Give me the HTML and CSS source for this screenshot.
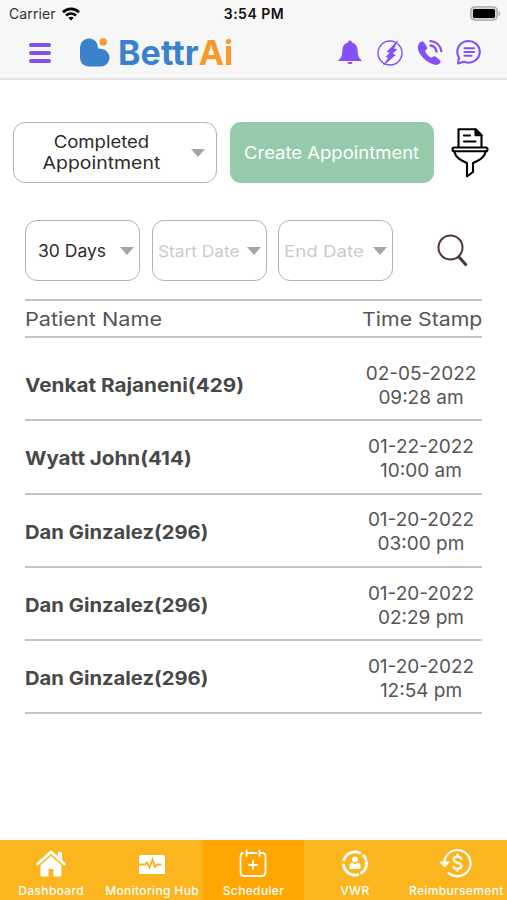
FILE: index.html
```
<!DOCTYPE html>
<html lang="en">
<head>
<meta charset="utf-8">
<title>BettrAi Scheduler</title>
<link rel="stylesheet" href="styles.css">
</head>
<body>
<div class="app">
  <header class="top">
    <div class="status">
      <div class="carrier"><span>Carrier</span>
        <svg width="18" height="14" viewBox="0 0 18 14" fill="none" stroke="#000" stroke-width="2.6"><path d="M1 5.2C5.5.8 12.5.8 17 5.2M4 8.5c2.800-2.700 7.200-2.700 10 0"/><path d="M9 13.500 6.300 10.800c1.500-1.400 3.900-1.400 5.400 0z" fill="#000" stroke="none"/></svg>
      </div>
      <div class="clock">3:54 PM</div>
      <svg class="battery" width="32" height="15" viewBox="0 0 32 15"><rect x=".8" y=".8" width="26.400" height="13.400" rx="4" fill="#d5d5d5" stroke="#aaa" stroke-width="1.300"/><rect x="3" y="3" width="22" height="9" rx="1.500" fill="#000"/><path d="M28.500 5c2.300.7 2.300 4.300 0 5z" fill="#aaa"/></svg>
    </div>
    <nav class="bar">
      <svg class="menu" width="24" height="22" viewBox="0 0 24 22" stroke="#8250f0" stroke-width="4" stroke-linecap="round"><path d="M3 3h18M3 11h18M3 19h18"/></svg>
      <div class="brand">
        <svg width="32" height="32" viewBox="0 0 32 32"><path d="M0 10.500a9 9 0 0 1 17.300-3.500c.7 2 .1 3.500 1 4.300.9.800 2 .4 3.700.7a8.800 8.800 0 0 1-1 17.500H9.500c-6 0-9.500-4-9.500-9z" fill="#3a83cc"/><circle cx="23.200" cy="4.900" r="3.700" fill="#f8992c"/></svg>
        <span class="word">Bettr<b>Ai</b></span>
      </div>
      <div class="actions">
        <svg width="26" height="28" viewBox="0 0 26 28" fill="#8550fa"><path d="M13 1.500c1.200 0 2 .8 2 2 4.200 1 5.500 4.500 5.700 8.500.2 5 1.300 7.500 4 9.200v.8H1.300v-.8c2.700-1.700 3.800-4.200 4-9.200.2-4 1.500-7.500 5.700-8.500 0-1.200.8-2 2-2zM10.500 23h5c0 3-5 3-5 0z"/></svg>
        <svg width="28" height="28" viewBox="0 0 28 28"><circle cx="14" cy="14" r="12" fill="none" stroke="#8550fa" stroke-width="1.400"/><path d="M22.500.5 10.500 13l3.300.8-4.500 4.200 2.800.8L6.500 27.500 20 15.800l-3.200-1 4.500-4.500-3.200-.8z" fill="#8550fa"/></svg>
        <svg width="26" height="28" viewBox="0 0 26 28"><path d="M2 4.500C4 2 6 2 7.500 4L10 8c.8 1.500-.4 2.500-1.700 3.500-1.200 1 4.700 8 6.700 7 1.400-1 2.300-1.700 3.700-.8l4 3c2 1.800.5 3.600-1.700 4.800C15 28-4 14 2 4.500z" fill="#8550fa"/><path d="M13.500 6.500c3.500.5 5.500 3 6 6M13.500 2.200c6 .5 10 4.500 10.800 10" fill="none" stroke="#8550fa" stroke-width="2.300" stroke-linecap="round"/></svg>
        <svg width="26" height="28" viewBox="0 0 26 28" fill="none" stroke="#8550fa" stroke-width="2.100" stroke-linecap="round" stroke-linejoin="round"><path d="M2 24.500 3 18.500A11.200 10.800 0 1 1 8 22.700z"/><path d="M8.500 9.300h9.500M8.500 13h9.500M8.500 16.700h7"/></svg>
      </div>
    </nav>
  </header>

  <main class="content">
    <div class="row-main">
      <div class="select select-lg"><span>Completed<br><span class="wide">Appointment</span></span><i class="caret"></i></div>
      <button class="create"><span>Create Appointment</span></button>
      <svg class="funnel" width="38" height="52" viewBox="0 0 38 52" fill="none" stroke="#000" stroke-width="2.100" stroke-linejoin="round" stroke-linecap="round"><path d="M7.500 20V2.300h17l6 6V20"/><path d="M24.500 2.300v6h6z" fill="#000"/><path d="M13 8.500h6M13 14.500h11.500"/><rect x="1.500" y="20.500" width="35" height="3.700" rx="1.800"/><path d="M3.500 24.500c.5 6 7 9 12.500 11.500V49.500l6-4.500V36c5.500-2.500 12-5.500 12.500-11.500"/></svg>
    </div>
    <div class="row-dates">
      <div class="select days"><span>30 Days</span><i class="caret"></i></div>
      <div class="select start"><span>Start Date</span><i class="caret"></i></div>
      <div class="select end"><span>End Date</span><i class="caret"></i></div>
      <svg class="search" width="32" height="34" viewBox="0 0 32 34" fill="none" stroke="#513536"><circle cx="13.500" cy="13.500" r="12" stroke-width="2"/><path d="m21.500 22.500 8 9" stroke-width="3"/></svg>
    </div>
    <section class="list">
      <div class="head"><span class="h-name">Patient Name</span><span class="h-time">Time Stamp</span></div>
      <div class="item first"><span class="name n1">Venkat Rajaneni(429)</span><span class="time">02-05-2022<br>09:28 am</span></div>
      <div class="item"><span class="name n2">Wyatt John(414)</span><span class="time">01-22-2022<br>10:00 am</span></div>
      <div class="item"><span class="name n3">Dan Ginzalez(296)</span><span class="time">01-20-2022<br>03:00 pm</span></div>
      <div class="item"><span class="name n3">Dan Ginzalez(296)</span><span class="time">01-20-2022<br>02:29 pm</span></div>
      <div class="item"><span class="name n3">Dan Ginzalez(296)</span><span class="time">01-20-2022<br>12:54 pm</span></div>
    </section>
  </main>

  <footer class="tabs">
    <div class="tab">
      <svg width="32" height="30" viewBox="0 0 32 30"><path d="M2.500 16 16 4l13.500 12" fill="none" stroke="#fff" stroke-width="3" stroke-linecap="round" stroke-linejoin="round"/><path d="M23 4h4v9l-4-4zM16 8l10.500 9.300V27a1.500 1.500 0 0 1-1.500 1.500h-6.500V21h-5v7.500H7A1.500 1.500 0 0 1 5.500 27v-9.700z" fill="#fff"/></svg>
      <span>Dashboard</span></div>
    <div class="tab">
      <svg width="32" height="30" viewBox="0 0 32 30"><rect x="3" y="7" width="26" height="19" rx="1.500" fill="#fff"/><path d="M3 16.500h6l2-2 2.500 5 3-8 2.500 7.500 2-2.500h4.500" fill="none" stroke="#fab31f" stroke-width="1.900"/></svg>
      <span>Monitoring Hub</span></div>
    <div class="tab active">
      <svg width="32" height="30" viewBox="0 0 32 30" fill="none" stroke="#fff" stroke-width="1.800" stroke-linecap="round"><path d="M6 5C4 5.300 3.500 6.500 3.500 8.500V24c0 2.700 1.300 4 4 4h17c2.700 0 4-1.300 4-4V8.500C28.500 6.500 28 5.300 26 5M9.500 2.500V8M22.500 2.500V8M9.500 5h10M22.500 5H25M16 13v8M12 17h8"/></svg>
      <span>Scheduler</span></div>
    <div class="tab">
      <svg width="32" height="30" viewBox="0 0 32 30"><circle cx="16" cy="15.500" r="11.600" fill="none" stroke="#fff" stroke-width="2.800" stroke-dasharray="22 2.290" transform="rotate(70 16 15.500)"/><circle cx="16" cy="11.300" r="2.900" fill="#fff"/><path d="M10.500 21v-3.500c0-2 1.200-3 3-3l2.500 1.800 2.500-1.800c1.800 0 3 1 3 3V21z" fill="#fff"/></svg>
      <span>VWR</span></div>
    <div class="tab">
      <svg width="36" height="30" viewBox="0 0 36 32" fill="none" stroke="#fff" stroke-width="2.300" stroke-linecap="round"><path d="M5.500 16A14 14 0 1 1 10 26.500M11 27a14 14 0 0 0 9 3"/><path d="m2.500 15.500 3.300 3.700 3.500-3.700z" fill="#fff"/><path d="M23.500 11.500c-1-3.500-8-3-8 .8 0 4.700 8.300 2.300 8.300 6.900 0 3.700-7.300 4.300-8.500.8M19.500 7v2M19.500 22.500v2"/></svg>
      <span>Reimbursement</span></div>
  </footer>
</div>
</body>
</html>
```
FILE: styles.css
```
* { box-sizing: border-box; }
body { margin: 0; background: #fff; font-family: Inter, "Liberation Sans", sans-serif; color: #555; }
svg { display: block; flex: none; }
.app { width: 507px; height: 900px; display: flex; flex-direction: column; overflow: hidden; }
.top { height: 80px; background: #f7f7f7; border-bottom: 2px solid #e4e4e4; flex: none; }
.status { height: 27px; display: grid; grid-template-columns: 1fr auto 1fr; align-items: center; padding: 0 5px 0 9px; color: #111; font-size: 14px; }
.carrier { display: flex; align-items: center; gap: 6px; letter-spacing: .1px; color: #333; }
.clock { font-weight: 600; letter-spacing: .5px; margin-left: -3px; }
.battery { justify-self: end; }
.bar { height: 51px; display: flex; align-items: center; padding-left: 28px; }
.brand { display: flex; align-items: center; margin-left: 28px; gap: 6px; }
.word { font-size: 34px; line-height: 40px; font-weight: 650; letter-spacing: .1px; color: #3a83cc; }
.word b { color: #f8992c; font-weight: 700; letter-spacing: -.3px; }
.actions { display: flex; align-items: center; margin-left: auto; padding-right: 25px; gap: 13px; }
.content { flex: 1; padding: 42px 13px 0; }
.row-main { display: flex; align-items: center; height: 61px; }
.select { border: 1.500px solid #b2b2b2; border-radius: 12px; height: 61px; display: flex; align-items: center; font-size: 17px; color: #2b2b2b; white-space: nowrap; }
.select > span, .create span, .wide, .head span, .name { display: inline-block; transform-origin: left; }
.caret { border: 7px solid transparent; border-top: 8px solid #a5a5a5; border-bottom: 0; }
.select-lg { width: 204px; justify-content: space-between; padding: 0 11px 0 36px; line-height: 21px; text-align: center; }
.select-lg > span { transform: scaleX(1.09); transform-origin: center; }
.wide { transform: scaleX(1.05); transform-origin: center; }
.create { width: 204px; height: 61px; margin-left: 12.500px; border: 0; border-radius: 11px; background: #95cbaa; color: #fff; font: 17px Inter, sans-serif; white-space: nowrap; padding: 0; }
.create span { transform: scaleX(1.087); transform-origin: center; }
.funnel { margin-left: 17.500px; }
.row-dates { display: flex; align-items: center; gap: 11.500px; margin: 37px 0 0 12px; }
.days, .start, .end { width: 115px; justify-content: space-between; padding: 0 5px; }
.days { padding-left: 12px; }
.days > span { transform: scaleX(1.03); }
.start, .end { color: #cbcbcb; font-size: 16px; }
.start > span { transform: scaleX(1.08); }
.end > span { transform: scaleX(1.17); }
.search { margin-left: 32px; }
.list { margin: 18px 12px 0; }
.head { height: 39px; padding-top: 1px; border-top: 2px solid #c4c4c4; border-bottom: 2px solid #c4c4c4; display: flex; justify-content: space-between; align-items: center; font-size: 19px; white-space: nowrap; }
.head .h-name { transform: scaleX(1.14); }
.head .h-time { transform: scaleX(1.12); transform-origin: right; }
.item { height: 73.300px; padding-top: 4px; border-bottom: 2px solid #c4c4c4; display: flex; justify-content: space-between; align-items: center; }
.first { margin-top: 10px; }
.name { font-size: 19px; font-weight: 700; color: #484848; }
.n1 { transform: scaleX(1.09); }
.n2 { transform: scaleX(1.085); }
.n3 { transform: scaleX(1.065); }
.time { width: 122px; text-align: center; font-size: 19px; line-height: 24px; white-space: nowrap; }
.tabs { height: 60px; display: grid; grid-template-columns: repeat(5, 1fr); background: #fab51f; flex: none; }
.tab { display: flex; flex-direction: column; align-items: center; justify-content: space-between; padding: 8px 0 2px; color: #fff; font-size: 12px; line-height: 15px; font-weight: 500; letter-spacing: .35px; white-space: nowrap; }
.tab:first-child span { margin-left: 1px; }
.active { background: #ffa600; }
```
